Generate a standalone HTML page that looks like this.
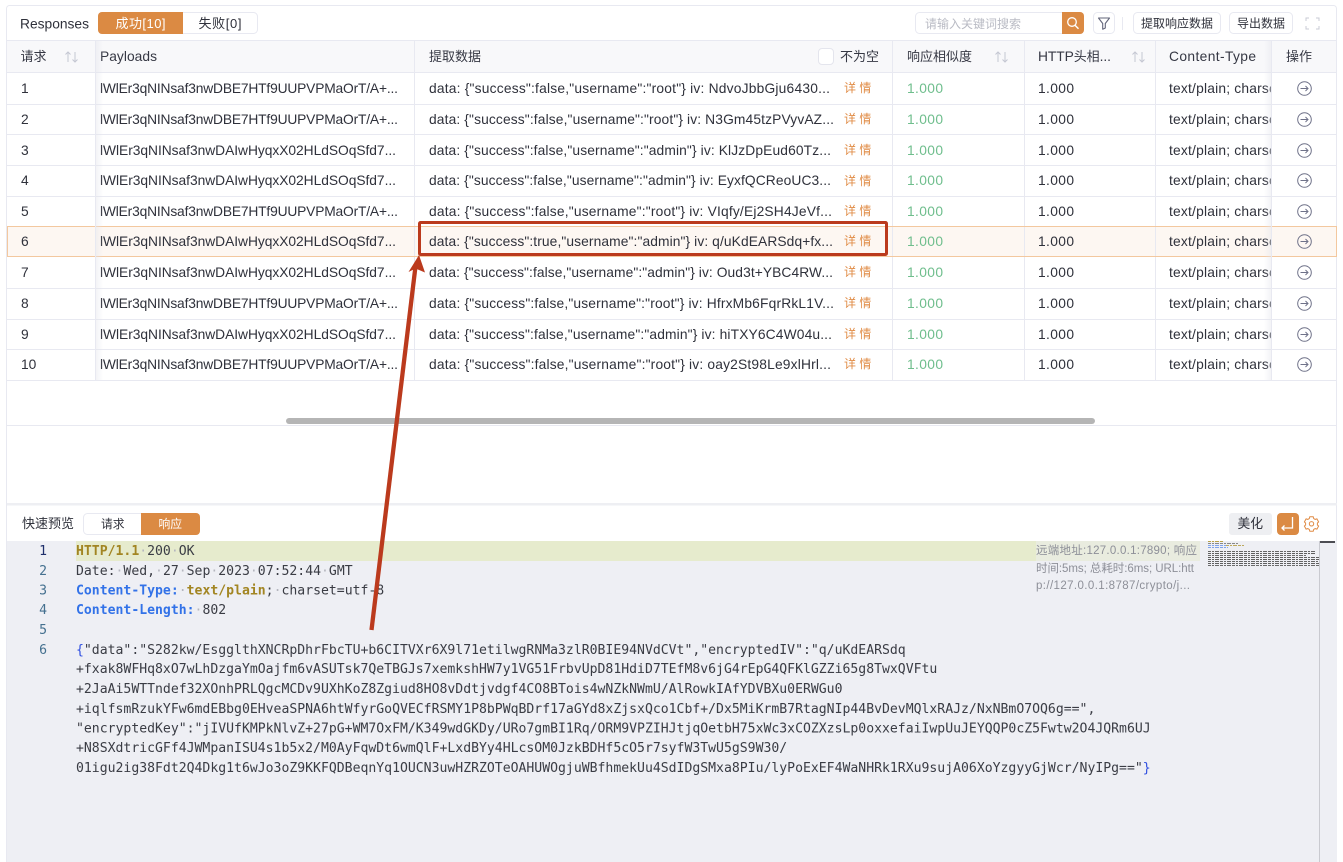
<!DOCTYPE html>
<html lang="zh">
<head>
<meta charset="utf-8">
<title>Responses</title>
<style>
html,body{margin:0;padding:0;background:#fff;width:1343px;height:862px;overflow:hidden}
svg{display:block;position:absolute;left:0;top:0}
text{font-family:"Liberation Sans","Noto Sans CJK SC",sans-serif;font-size:13.8px;fill:#2f313b}
.k{font-size:13px}
.h{fill:#363844}
.g{fill:#6fbe8d}
text.o{fill:#e08b45;font-size:12px}
.c text,text.c{font-family:"DejaVu Sans Mono",monospace;font-size:13.145px;fill:#3a3c44}
.d{fill:#b4b6be}
.b{fill:#3272e8;font-weight:bold}
.y{fill:#a28522;font-weight:bold}
text.n{font-family:"DejaVu Sans Mono",monospace;font-size:13.145px;fill:#44708f;text-anchor:end}
.s{fill:none;stroke:#c4c7d2;stroke-width:1}
.l{stroke:#e8e9f1;stroke-width:1}
</style>
</head>
<body>
<svg width="1343" height="862" viewBox="0 0 1343 862" xmlns="http://www.w3.org/2000/svg">
<defs>
<linearGradient id="sr" x1="0" x2="1" y1="0" y2="0"><stop offset="0" stop-color="#e4e5ec" stop-opacity=".45"/><stop offset="1" stop-color="#e4e5ec" stop-opacity="0"/></linearGradient>
<linearGradient id="sl" x1="0" x2="1" y1="0" y2="0"><stop offset="0" stop-color="#e4e5ec" stop-opacity="0"/><stop offset="1" stop-color="#e4e5ec" stop-opacity=".45"/></linearGradient>
<clipPath id="cc"><rect x="1160" y="41" width="112" height="340"/></clipPath>
</defs>

<!-- outer frame -->
<rect x="6.5" y="5.5" width="1330" height="860" fill="#fff" stroke="#e8e9f1" rx="3"/>

<!-- toolbar -->
<text x="20" y="28.5" textLength="69">Responses</text>
<rect x="98.5" y="12.5" width="159" height="21" rx="4" fill="#fff" stroke="#e8e9f1"/>
<path d="M102 12h81v22h-81a4 4 0 0 1-4-4v-14a4 4 0 0 1 4-4z" fill="#db8a43"/>
<text x="115.500" y="28" class="k" style="fill:#fff" textLength="50">成功[10]</text>
<text x="198.500" y="28" class="k" textLength="43">失败[0]</text>

<rect x="915.500" y="12.500" width="168" height="21" rx="4" fill="#fff" stroke="#e8e9f1"/>
<text x="925" y="28" style="fill:#b9bbc4;font-size:12px">请输入关键词搜索</text>
<path d="M1062 12h18a4 4 0 0 1 4 4v14a4 4 0 0 1-4 4h-18z" fill="#db8a43"/>
<circle cx="1072" cy="22" r="4.300" fill="none" stroke="#fff" stroke-width="1.300"/>
<path d="M1075 25.200l3.500 3.500" stroke="#fff" stroke-width="1.400" fill="none"/>
<rect x="1093.500" y="12.500" width="21" height="21" rx="4" fill="#fff" stroke="#e8e9f1"/>
<path d="M1098.500 18h11l-4.200 5.500v4.500l-2.600 1.200v-5.700z" fill="none" stroke="#62657a" stroke-width="1.100" stroke-linejoin="round"/>
<path d="M1122.500 17v13" class="l"/>
<rect x="1133.500" y="12.500" width="87" height="21" rx="4" fill="#fff" stroke="#e8e9f1"/>
<text x="1141" y="27.500" style="font-size:12px">提取响应数据</text>
<rect x="1229.500" y="12.500" width="63" height="21" rx="4" fill="#fff" stroke="#e8e9f1"/>
<text x="1237" y="27.500" style="font-size:12px">导出数据</text>
<path d="M1306 21v-3h3M1316 18h3v3M1319 26v3h-3M1309 29h-3v-3" fill="none" stroke="#c8cbd4" stroke-width="1"/>

<!-- table header -->
<rect x="7" y="41" width="1329" height="31" fill="#f8f8fa"/>

<!-- highlight row -->
<rect x="7" y="226" width="1329" height="31" fill="#fdf7f2"/>

<!-- row lines -->
<path d="M7 40.500h1329" class="l"/>
<path d="M7 72.500h1329" class="l"/>
<path d="M7 104.500h1329" class="l"/>
<path d="M7 134.500h1329" class="l"/>
<path d="M7 165.500h1329" class="l"/>
<path d="M7 196.500h1329" class="l"/>
<path d="M7 288.500h1329" class="l"/>
<path d="M7 319.500h1329" class="l"/>
<path d="M7 349.500h1329" class="l"/>
<path d="M7 380.500h1329" class="l"/>
<path d="M7 425.500h1329" class="l"/>

<!-- column lines -->
<path d="M414.500 41v340M892.500 41v340M1024.500 41v340M1155.500 41v340" class="l"/>
<rect x="7.500" y="226.500" width="1329" height="30" fill="none" stroke="#f3c89f" stroke-width="1"/>

<!-- header text -->
<text x="20.500" y="61" class="h k">请求</text>
<text x="100" y="61" class="h" textLength="57">Payloads</text>
<text x="429" y="61" class="h k">提取数据</text>
<rect x="818.500" y="48.500" width="15" height="16" rx="3.500" fill="#fff" stroke="#e4e5ed"/>
<text x="840" y="61" class="h k">不为空</text>
<text x="907" y="61" class="h k">响应相似度</text>
<text x="1038" y="61" class="h" textLength="73">HTTP<tspan style="font-size:13px">头相</tspan>...</text>
<text x="1169" y="61" class="h" textLength="87">Content-Type</text>

<path d="M68 62v-10M65.500 54.500l2.500-2.500 2.500 2.500" class="s"/>
<path d="M75 52v10M72.500 59.500l2.500 2.500 2.500-2.500" class="s"/>
<path d="M998 62v-10M995.500 54.500l2.500-2.500 2.500 2.500" class="s"/>
<path d="M1005 52v10M1002.500 59.500l2.500 2.500 2.500-2.500" class="s"/>
<path d="M1135 62v-10M1132.500 54.500l2.500-2.500 2.500 2.500" class="s"/>
<path d="M1142 52v10M1139.500 59.500l2.500 2.500 2.500-2.500" class="s"/>

<!-- col 1 -->
<text x="21" y="93">1</text><text x="21" y="124">2</text><text x="21" y="155">3</text><text x="21" y="185">4</text><text x="21" y="216">5</text><text x="21" y="246">6</text><text x="21" y="277">7</text><text x="21" y="308">8</text><text x="21" y="339">9</text><text x="21" y="369">10</text>

<!-- payloads -->
<text x="100" y="93" textLength="298">lWlEr3qNINsaf3nwDBE7HTf9UUPVPMaOrT/A+...</text>
<text x="100" y="124" textLength="298">lWlEr3qNINsaf3nwDBE7HTf9UUPVPMaOrT/A+...</text>
<text x="100" y="155" textLength="296">lWlEr3qNINsaf3nwDAIwHyqxX02HLdSOqSfd7...</text>
<text x="100" y="185" textLength="296">lWlEr3qNINsaf3nwDAIwHyqxX02HLdSOqSfd7...</text>
<text x="100" y="216" textLength="298">lWlEr3qNINsaf3nwDBE7HTf9UUPVPMaOrT/A+...</text>
<text x="100" y="246" textLength="296">lWlEr3qNINsaf3nwDAIwHyqxX02HLdSOqSfd7...</text>
<text x="100" y="277" textLength="296">lWlEr3qNINsaf3nwDAIwHyqxX02HLdSOqSfd7...</text>
<text x="100" y="308" textLength="298">lWlEr3qNINsaf3nwDBE7HTf9UUPVPMaOrT/A+...</text>
<text x="100" y="339" textLength="296">lWlEr3qNINsaf3nwDAIwHyqxX02HLdSOqSfd7...</text>
<text x="100" y="369" textLength="298">lWlEr3qNINsaf3nwDBE7HTf9UUPVPMaOrT/A+...</text>

<!-- extracted data -->
<text x="429" y="93" textLength="401">data: {"success":false,"username":"root"} iv: NdvoJbbGju6430...</text>
<text x="429" y="124" textLength="405">data: {"success":false,"username":"root"} iv: N3Gm45tzPVyvAZ...</text>
<text x="429" y="155" textLength="402">data: {"success":false,"username":"admin"} iv: KlJzDpEud60Tz...</text>
<text x="429" y="185" textLength="402">data: {"success":false,"username":"admin"} iv: EyxfQCReoUC3...</text>
<text x="429" y="216" textLength="403">data: {"success":false,"username":"root"} iv: VIqfy/Ej2SH4JeVf...</text>
<text x="429" y="246" textLength="404">data: {"success":true,"username":"admin"} iv: q/uKdEARSdq+fx...</text>
<text x="429" y="277" textLength="404">data: {"success":false,"username":"admin"} iv: Oud3t+YBC4RW...</text>
<text x="429" y="308" textLength="405">data: {"success":false,"username":"root"} iv: HfrxMb6FqrRkL1V...</text>
<text x="429" y="339" textLength="403">data: {"success":false,"username":"admin"} iv: hiTXY6C4W04u...</text>
<text x="429" y="369" textLength="402">data: {"success":false,"username":"root"} iv: oay2St98Le9xlHrl...</text>

<!-- detail -->
<text class="o" x="844" y="92">详 情</text><text class="o" x="844" y="123">详 情</text><text class="o" x="844" y="154">详 情</text><text class="o" x="844" y="185">详 情</text><text class="o" x="844" y="215">详 情</text><text class="o" x="844" y="245">详 情</text><text class="o" x="844" y="276">详 情</text><text class="o" x="844" y="307">详 情</text><text class="o" x="844" y="338">详 情</text><text class="o" x="844" y="368">详 情</text>

<!-- similarity -->
<text class="g" x="907" y="93" textLength="36">1.000</text><text class="g" x="907" y="124" textLength="36">1.000</text><text class="g" x="907" y="155" textLength="36">1.000</text><text class="g" x="907" y="185" textLength="36">1.000</text><text class="g" x="907" y="216" textLength="36">1.000</text><text class="g" x="907" y="246" textLength="36">1.000</text><text class="g" x="907" y="277" textLength="36">1.000</text><text class="g" x="907" y="308" textLength="36">1.000</text><text class="g" x="907" y="339" textLength="36">1.000</text><text class="g" x="907" y="369" textLength="36">1.000</text>

<text x="1038" y="93" textLength="36">1.000</text><text x="1038" y="124" textLength="36">1.000</text><text x="1038" y="155" textLength="36">1.000</text><text x="1038" y="185" textLength="36">1.000</text><text x="1038" y="216" textLength="36">1.000</text><text x="1038" y="246" textLength="36">1.000</text><text x="1038" y="277" textLength="36">1.000</text><text x="1038" y="308" textLength="36">1.000</text><text x="1038" y="339" textLength="36">1.000</text><text x="1038" y="369" textLength="36">1.000</text>

<!-- content-type -->
<g clip-path="url(#cc)">
<text x="1169" y="93" textLength="120">text/plain; charset=</text><text x="1169" y="124" textLength="120">text/plain; charset=</text><text x="1169" y="155" textLength="120">text/plain; charset=</text><text x="1169" y="185" textLength="120">text/plain; charset=</text><text x="1169" y="216" textLength="120">text/plain; charset=</text><text x="1169" y="246" textLength="120">text/plain; charset=</text><text x="1169" y="277" textLength="120">text/plain; charset=</text><text x="1169" y="308" textLength="120">text/plain; charset=</text><text x="1169" y="339" textLength="120">text/plain; charset=</text><text x="1169" y="369" textLength="120">text/plain; charset=</text>
</g>

<!-- fixed col shadows -->
<rect x="96" y="41" width="7" height="339" fill="url(#sr)"/>
<path d="M95.500 41v339" class="l"/>
<rect x="1264" y="41" width="7" height="339" fill="url(#sl)"/>
<path d="M1271.500 41v339" class="l"/>
<text x="1286" y="61" class="h k">操作</text>

<g fill="none" stroke="#6f7289" stroke-width="1">
<circle cx="1304.500" cy="88.500" r="6.800"/><path d="M1300.500 88.500h7.500M1305.500 86l2.500 2.500-2.500 2.500"/>
<circle cx="1304.500" cy="119.500" r="6.800"/><path d="M1300.500 119.500h7.500M1305.500 117l2.500 2.500-2.500 2.500"/>
<circle cx="1304.500" cy="150.500" r="6.800"/><path d="M1300.500 150.500h7.500M1305.500 148l2.500 2.500-2.500 2.500"/>
<circle cx="1304.500" cy="180.500" r="6.800"/><path d="M1300.500 180.500h7.500M1305.500 178l2.500 2.500-2.500 2.500"/>
<circle cx="1304.500" cy="211.500" r="6.800"/><path d="M1300.500 211.500h7.500M1305.500 209l2.500 2.500-2.500 2.500"/>
<circle cx="1304.500" cy="241.500" r="6.800"/><path d="M1300.500 241.500h7.500M1305.500 239l2.500 2.500-2.500 2.500"/>
<circle cx="1304.500" cy="272.500" r="6.800"/><path d="M1300.500 272.500h7.500M1305.500 270l2.500 2.500-2.500 2.500"/>
<circle cx="1304.500" cy="303.500" r="6.800"/><path d="M1300.500 303.500h7.500M1305.500 301l2.500 2.500-2.500 2.500"/>
<circle cx="1304.500" cy="334.500" r="6.800"/><path d="M1300.500 334.500h7.500M1305.500 332l2.500 2.500-2.500 2.500"/>
<circle cx="1304.500" cy="364.500" r="6.800"/><path d="M1300.500 364.500h7.500M1305.500 362l2.500 2.500-2.500 2.500"/>
</g>

<!-- scrollbar -->
<rect x="286" y="418" width="809" height="6" rx="3" fill="#b5b5b5"/>

<!-- bottom panel -->
<rect x="7" y="503" width="1330" height="2.500" fill="#eeeff3"/>
<text x="22" y="528" class="k">快速预览</text>
<rect x="83.500" y="513.500" width="116" height="21" rx="4" fill="#fff" stroke="#e8e9f1"/>
<path d="M141 513h55a4 4 0 0 1 4 4v14a4 4 0 0 1-4 4h-55z" fill="#db8a43"/>
<text x="101" y="528" style="font-size:11.800px">请求</text>
<text x="158.500" y="528" style="font-size:11.800px;fill:#fff">响应</text>

<rect x="1229" y="513" width="43" height="22" rx="3" fill="#eeeff2"/>
<text x="1237.500" y="528" style="font-size:12.800px">美化</text>
<rect x="1277" y="513" width="22" height="22" rx="4" fill="#db8a43"/>
<path d="M1292.500 517v11h-10.500M1284.500 525.500l-2.500 2.500 2.500 2.500" fill="none" stroke="#fff" stroke-width="1.300"/>
<g fill="none" stroke="#e08b45" stroke-width="1">
<path d="M1309.800 516.800h3.400l.5 1.700 1.500.9 1.700-.5 1.700 3-1.200 1.200v1.800l1.200 1.200-1.700 3-1.700-.5-1.500.9-.5 1.700h-3.400l-.5-1.700-1.500-.9-1.700.5-1.700-3 1.200-1.200v-1.800l-1.200-1.200 1.700-3 1.700.5 1.500-.9z"/>
<circle cx="1311.500" cy="523.800" r="2.200"/>
</g>

<!-- code area -->
<rect x="7" y="541" width="1330" height="321" fill="#eeeff4"/>
<rect x="76" y="541" width="960" height="20" fill="#e6ebcd"/>
<rect x="1036" y="541" width="164" height="20" fill="#e9ecdf"/>

<text class="n" x="47" y="555" style="fill:#1f2f6b">1</text>
<text class="n" x="47" y="575">2</text>
<text class="n" x="47" y="594.500">3</text>
<text class="n" x="47" y="614">4</text>
<text class="n" x="47" y="634">5</text>
<text class="n" x="47" y="654">6</text>

<g class="c">
<text x="76" y="555"><tspan class="y">HTTP/1.1</tspan><tspan class="d">·</tspan>200<tspan class="d">·</tspan>OK</text>
<text x="76" y="575">Date:<tspan class="d">·</tspan>Wed,<tspan class="d">·</tspan>27<tspan class="d">·</tspan>Sep<tspan class="d">·</tspan>2023<tspan class="d">·</tspan>07:52:44<tspan class="d">·</tspan>GMT</text>
<text x="76" y="594.500"><tspan class="b">Content-Type:</tspan><tspan class="d">·</tspan><tspan class="y">text/plain</tspan>;<tspan class="d">·</tspan>charset=utf-8</text>
<text x="76" y="614"><tspan class="b">Content-Length:</tspan><tspan class="d">·</tspan>802</text>
<text x="76" y="654"><tspan style="fill:#2f4fe0">{</tspan>"data":"S282kw/EsgglthXNCRpDhrFbcTU+b6CITVXr6X9l71etilwgRNMa3zlR0BIE94NVdCVt","encryptedIV":"q/uKdEARSdq</text>
<text x="76" y="673">+fxak8WFHq8xO7wLhDzgaYmOajfm6vASUTsk7QeTBGJs7xemkshHW7y1VG51FrbvUpD81HdiD7TEfM8v6jG4rEpG4QFKlGZZi65g8TwxQVFtu</text>
<text x="76" y="693">+2JaAi5WTTndef32XOnhPRLQgcMCDv9UXhKoZ8Zgiud8HO8vDdtjvdgf4CO8BTois4wNZkNWmU/AlRowkIAfYDVBXu0ERWGu0</text>
<text x="76" y="713">+iqlfsmRzukYFw6mdEBbg0EHveaSPNA6htWfyrGoQVECfRSMY1P8bPWqBDrf17aGYd8xZjsxQco1Cbf+/Dx5MiKrmB7RtagNIp44BvDevMQlxRAJz/NxNBmO7OQ6g==",</text>
<text x="76" y="732.500">"encryptedKey":"jIVUfKMPkNlvZ+27pG+WM7OxFM/K349wdGKDy/URo7gmBI1Rq/ORM9VPZIHJtjqOetbH75xWc3xCOZXzsLp0oxxefaiIwpUuJEYQQP0cZ5Fwtw2O4JQRm6UJ</text>
<text x="76" y="752">+N8SXdtricGFf4JWMpanISU4s1b5x2/M0AyFqwDt6wmQlF+LxdBYy4HLcsOM0JzkBDHf5cO5r7syfW3TwU5gS9W30/</text>
<text x="76" y="772">01igu2ig38Fdt2Q4Dkg1t6wJo3oZ9KKFQDBeqnYq1OUCN3uwHZRZOTeOAHUWOgjuWBfhmekUu4SdIDgSMxa8PIu/lyPoExEF4WaNHRk1RXu9sujA06XoYzgyyGjWcr/NyIPg==<tspan style="fill:#3a3c44">"</tspan><tspan style="fill:#2f4fe0">}</tspan></text>
</g>

<!-- info text -->
<text x="1036" y="554" style="fill:#8d8f98;font-size:11.500px" textLength="161">远端地址:127.0.0.1:7890; 响应</text>
<text x="1036" y="572" style="fill:#8d8f98;font-size:11.500px" textLength="158">时间:5ms; 总耗时:6ms; URL:htt</text>
<text x="1036" y="589" style="fill:#8d8f98;font-size:11.500px" textLength="154">p://127.0.0.1:8787/crypto/j...</text>

<!-- minimap -->
<g fill="none" stroke-width="1" stroke-dasharray="3 1 2 1 4 1">
<path d="M1208 541.500h16" stroke="#b9a24a"/>
<path d="M1208 543.500h30" stroke="#888"/>
<path d="M1208 545.500h18" stroke="#7fa2ea"/>
<path d="M1226 545.500h18" stroke="#bda95e"/>
<path d="M1208 547.500h20" stroke="#7fa2ea"/>
<path d="M1208 551.500h107" stroke="#666"/>
<path d="M1208 553.500h108" stroke="#5f5f5f"/>
<path d="M1208 555.500h98" stroke="#6a6a6a"/>
<path d="M1208 557.500h111" stroke="#5f5f5f"/>
<path d="M1208 559.500h111" stroke="#5f5f5f"/>
<path d="M1208 561.500h110" stroke="#666"/>
<path d="M1208 563.500h111" stroke="#5f5f5f"/>
<path d="M1208 565.500h111" stroke="#6a6a6a"/>
</g>
<path d="M1319.500 541v321" stroke="#c9cad0"/>
<rect x="1320" y="541" width="15" height="2" fill="#4c4d53"/>

<!-- annotation -->
<rect x="419.500" y="222.500" width="467" height="32" rx="1" fill="none" stroke="#bb3a1d" stroke-width="3"/>
<path d="M371.500 630L415.300 268" stroke="#bb3a1d" stroke-width="4.300" fill="none"/>
<path d="M419 255L425 272.500L415.500 268.500L408.500 272z" fill="#bb3a1d"/>
</svg>
</body>
</html>
